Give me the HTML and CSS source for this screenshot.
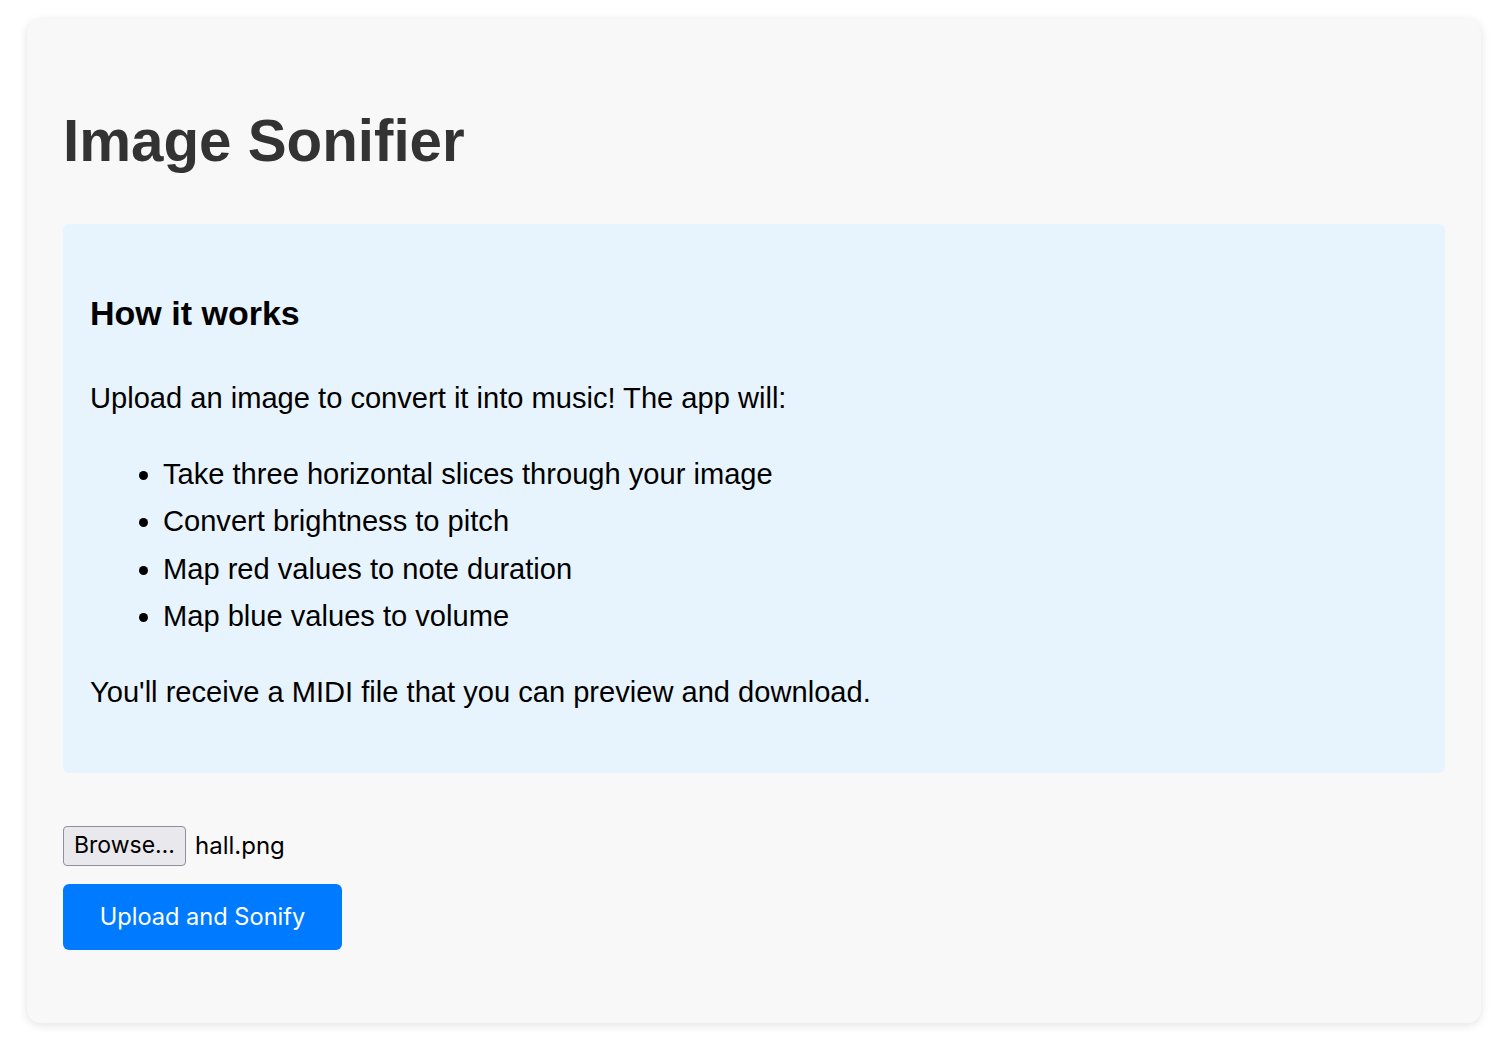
FILE: index.html
```html
<!DOCTYPE html>
<html lang="en">
<head>
<meta charset="utf-8">
<title>Image Sonifier</title>
<link rel="stylesheet" href="styles.css">
</head>
<body>
<main class="card">
  <h1 class="title">Image Sonifier</h1>
  <section class="info">
    <h3 class="info-title">How it works</h3>
    <p class="info-text">Upload an image to convert it into music! The app will:</p>
    <ul class="info-list">
      <li>Take three horizontal slices through your image</li>
      <li>Convert brightness to pitch</li>
      <li>Map red values to note duration</li>
      <li>Map blue values to volume</li>
    </ul>
    <p class="info-text">You'll receive a MIDI file that you can preview and download.</p>
  </section>
  <form class="upload-form" onsubmit="return false">
    <div class="file-row">
      <button type="button" class="browse-btn">Browse…</button>
      <span class="file-name">hall.png</span>
    </div>
    <button type="submit" class="submit-btn">Upload and Sonify</button>
  </form>
</main>
</body>
</html>
```
FILE: styles.css
```css
html, body {
  margin: 0;
  background: #ffffff;
}

body {
  padding: 19px 31px 19px 27px;
  font-family: "Liberation Sans", Arial, sans-serif;
  font-size: 29.1px;
  line-height: 1.63;
  color: #000;
}

.card {
  background: #f8f8f8;
  border-radius: 14px;
  box-shadow: 0 2px 10px rgba(0, 0, 0, 0.12);
  padding: 36px 36px 73px;
}

.title {
  margin: 51px 0 48px;
  font-size: 58.3px;
  line-height: 1.2;
  font-weight: bold;
  color: #333333;
}

.info {
  background: #e8f4fd;
  border-radius: 6px;
  padding: 28px 26px 27px 27px;
}

.info-title {
  margin: 33.7px 0;
  font-size: 34px;
  font-weight: bold;
}

.info-text {
  margin: 28.8px 0;
}

.info-list {
  margin: 28.8px 0;
  padding-left: 73px;
}

.upload-form {
  margin-top: 53px;
  display: flex;
  flex-direction: column;
  align-items: flex-start;
  gap: 18px;
}

.file-row {
  display: flex;
  align-items: center;
  gap: 9px;
  height: 40px;
}

.browse-btn {
  box-sizing: border-box;
  height: 40px;
  width: 123px;
  padding: 0;
  border: 1px solid #8f8f9d;
  border-radius: 4px;
  background: #e9e9ed;
  color: #000;
  font-family: Inter, "Noto Sans", sans-serif;
  font-size: 23px;
  line-height: 1;
}

.file-name {
  font-family: Inter, "Noto Sans", sans-serif;
  font-size: 24px;
  line-height: 1;
  color: #000;
}

.submit-btn {
  box-sizing: border-box;
  height: 66px;
  width: 279px;
  padding: 0;
  border: none;
  border-radius: 6px;
  background: #007bff;
  color: #ffffff;
  font-family: Inter, "Noto Sans", sans-serif;
  font-size: 23.6px;
  line-height: 1;
}
```
